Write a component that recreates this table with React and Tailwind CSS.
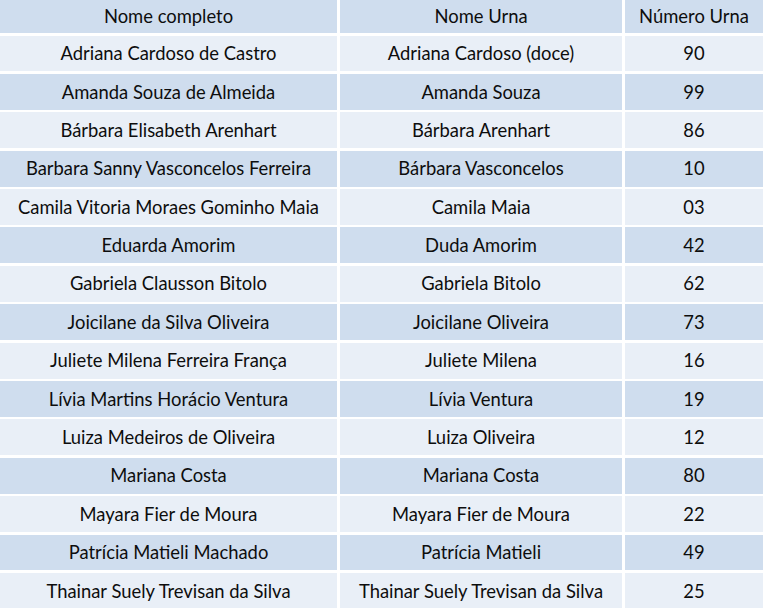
const rows = [
  ["Adriana Cardoso de Castro", "Adriana Cardoso (doce)", "90"],
  ["Amanda Souza de Almeida", "Amanda Souza", "99"],
  ["Bárbara Elisabeth Arenhart", "Bárbara Arenhart", "86"],
  ["Barbara Sanny Vasconcelos Ferreira", "Bárbara Vasconcelos", "10"],
  ["Camila Vitoria Moraes Gominho Maia", "Camila Maia", "03"],
  ["Eduarda Amorim", "Duda Amorim", "42"],
  ["Gabriela Clausson Bitolo", "Gabriela Bitolo", "62"],
  ["Joicilane da Silva Oliveira", "Joicilane Oliveira", "73"],
  ["Juliete Milena Ferreira França", "Juliete Milena", "16"],
  ["Lívia Martins Horácio Ventura", "Lívia Ventura", "19"],
  ["Luiza Medeiros de Oliveira", "Luiza Oliveira", "12"],
  ["Mariana Costa", "Mariana Costa", "80"],
  ["Mayara Fier de Moura", "Mayara Fier de Moura", "22"],
  ["Patrícia Matieli Machado", "Patrícia Matieli", "49"],
  ["Thainar Suely Trevisan da Silva", "Thainar Suely Trevisan da Silva", "25"],
];

function Cell({ children, dark, header }) {
  return (
    <div
      className={`flex items-center justify-center whitespace-nowrap pt-[1px] ${
        header ? "h-[33px]" : "h-[35.9px]"
      } ${dark ? "bg-[#cfddee]" : "bg-[#e9eff7]"}`}
    >
      {children}
    </div>
  );
}

export default function App() {
  return (
    <div className="w-[763px] h-[608px] overflow-hidden bg-white font-['Lato',sans-serif] text-[18.4px] text-[#0d0d0d]">
      <div className="grid grid-cols-[337px_282px_1fr] gap-x-[3px] gap-y-[2.5px]">
        <Cell header dark>Nome completo</Cell>
        <Cell header dark>Nome Urna</Cell>
        <Cell header dark>Número Urna</Cell>
        {rows.map((r, i) =>
          r.map((c, j) => (
            <Cell key={i + "-" + j} dark={i % 2 === 1}>
              {c}
            </Cell>
          ))
        )}
      </div>
    </div>
  );
}
